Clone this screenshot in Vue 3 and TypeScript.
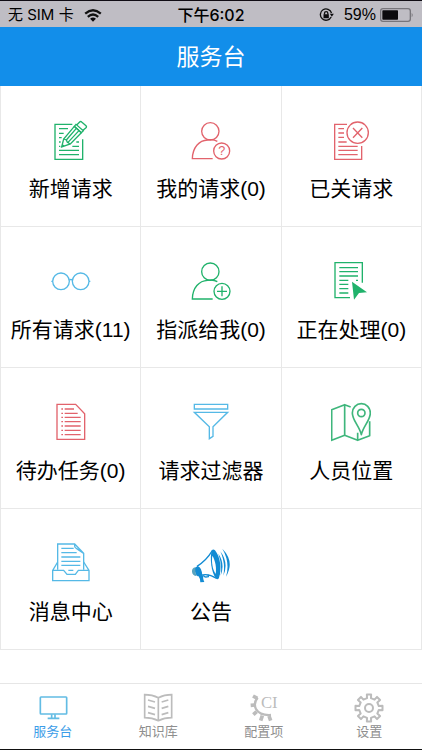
<script setup lang="ts">
import { ref } from 'vue'

interface Tile {
  icon: string
  name: string
  count?: number
}

const tiles: Tile[] = [
  { icon: 'create', name: '新增请求' },
  { icon: 'mine', name: '我的请求', count: 0 },
  { icon: 'closed', name: '已关请求' },
  { icon: 'all', name: '所有请求', count: 11 },
  { icon: 'assigned', name: '指派给我', count: 0 },
  { icon: 'progress', name: '正在处理', count: 0 },
  { icon: 'todo', name: '待办任务', count: 0 },
  { icon: 'filter', name: '请求过滤器' },
  { icon: 'location', name: '人员位置' },
  { icon: 'inbox', name: '消息中心' },
  { icon: 'notice', name: '公告' },
]

const tabs = [
  { id: 'desk', name: '服务台' },
  { id: 'knowledge', name: '知识库' },
  { id: 'config', name: '配置项' },
  { id: 'settings', name: '设置' },
]

const activeTab = ref('desk')

// Outline of a toothed wheel: each tooth is a trapezoid between two root arcs.
function gearPath(c: number, outer: number, root: number, teeth: number): string {
  const step = (Math.PI * 2) / teeth
  const points: string[] = []
  for (let i = 0; i < teeth; i++) {
    const a = i * step - Math.PI / 2
    const corners: [number, number][] = [
      [root, -0.25],
      [outer, -0.2],
      [outer, 0.2],
      [root, 0.25],
    ]
    for (const [r, k] of corners) {
      const t = a + k * step
      points.push(`${(c + r * Math.cos(t)).toFixed(1)} ${(c + r * Math.sin(t)).toFixed(1)}`)
    }
  }
  return `M${points.join('L')}Z`
}

const settingsGear = gearPath(45, 41, 30, 8)
</script>

<template>
  <div class="screen">
    <div class="status">
      <div class="status-side">
        <span class="carrier">无 SIM 卡</span>
        <svg class="wifi" viewBox="0 0 54 40" aria-hidden="true">
          <path d="M3 14Q27 -6 51 14" />
          <path d="M11 24Q27 10 43 24" />
          <path class="solid" d="M18 30Q27 23 36 30L27 39Z" />
        </svg>
      </div>
      <span class="time">下午6:02</span>
      <div class="status-side end">
        <svg class="lock" viewBox="0 0 44 42" aria-hidden="true">
          <path d="M36 27A17 17 0 1 1 37 15" />
          <path class="solid" d="M32 17H44L38 26Z" />
          <rect class="solid" x="13" y="19" width="16" height="12" rx="1" />
          <path d="M16 20V16A5 5 0 0 1 26 16V20" />
        </svg>
        <span class="percent">59%</span>
        <svg class="battery" viewBox="0 0 102 42" aria-hidden="true">
          <rect class="shell" x="2" y="2" width="89" height="38" rx="7" />
          <rect class="solid" x="7" y="7" width="47" height="28" rx="2" />
          <path class="cap" d="M95 14Q101 21 95 28Z" />
        </svg>
      </div>
    </div>

    <header class="header">
      <h1>服务台</h1>
    </header>

    <main class="content">
      <div class="grid">
        <button v-for="tile in tiles" :key="tile.icon" type="button" class="tile">
          <svg v-if="tile.icon === 'create'" class="icon green" viewBox="0 0 120 120" aria-hidden="true">
            <path d="M64 13H12V118H95V58" />
            <path d="M24 26H51M24 40H38M24 53H32M24 66H29M24 79H28M76 66H84M64 79H84M24 91H84M24 104H84" />
            <path d="M32 81L38 57L70 19L91 38L58 72Z" />
            <path d="M38 57L46 60L49 67L58 72M46 60L76 25M51 67L84 32M34 74L39 79" />
            <path d="M70 19L75 13L97 32L91 38ZM77 15L86 6Q89 3 92 6L105 17Q108 20 105 23L96 31" />
          </svg>

          <svg v-else-if="tile.icon === 'mine'" class="icon red" viewBox="0 0 120 120" aria-hidden="true">
            <circle cx="58" cy="34" r="26" />
            <path d="M65 116H4C5 82 24 61 50 60Q67 57 79 64" />
            <circle cx="92" cy="93" r="24" />
            <text x="92" y="106" text-anchor="middle">?</text>
          </svg>

          <svg v-else-if="tile.icon === 'closed'" class="icon red" viewBox="0 0 120 120" aria-hidden="true">
            <path d="M48 13H11V118H92V78" />
            <path d="M22 26H39M22 39H39M22 52H39M22 66H47M22 79H80M22 91H80M22 104H80" />
            <circle cx="80" cy="38" r="32" />
            <path d="M66 24L94 53M94 24L66 53" />
          </svg>

          <svg v-else-if="tile.icon === 'all'" class="icon blue" viewBox="0 0 120 120" aria-hidden="true">
            <circle cx="30" cy="61" r="25" />
            <circle cx="89" cy="61" r="25" />
            <path d="M55 57Q60 54 64 57M1 61H5M114 61H118" />
          </svg>

          <svg v-else-if="tile.icon === 'assigned'" class="icon green" viewBox="0 0 120 120" aria-hidden="true">
            <circle cx="58" cy="32" r="26" />
            <path d="M65 114H4C5 80 24 59 50 58Q67 55 79 62" />
            <circle cx="93" cy="91" r="24" />
            <path d="M93 76V106M78 91H108" />
          </svg>

          <svg v-else-if="tile.icon === 'progress'" class="icon green" viewBox="0 0 120 120" aria-hidden="true">
            <path d="M57 110H12V5H94V65" />
            <path d="M25 20H81M25 32H81M25 45H81M25 58H52M75 58H81M25 70H52M25 83H52M25 96H52" />
            <path class="fill" d="M63 62L108 94L84 96L69 116Z" />
          </svg>

          <svg v-else-if="tile.icon === 'todo'" class="icon red" viewBox="0 0 120 120" aria-hidden="true">
            <path d="M18 7H74L101 35V112H18Z" />
            <path d="M41 21H69M41 34H80M41 46H89M41 59H89M41 72H89M41 85H89M41 98H89" />
            <path d="M31 21H36M31 34H36M31 46H36M31 59H36M31 72H36M31 85H36M31 98H36" />
          </svg>

          <svg v-else-if="tile.icon === 'filter'" class="icon blue" viewBox="0 0 120 120" aria-hidden="true">
            <path d="M10 7H110V21H10ZM10 31H110L66 74V103L55 110V74Z" />
          </svg>

          <svg v-else-if="tile.icon === 'location'" class="icon map" viewBox="0 0 120 120" aria-hidden="true">
            <path d="M59 15L41 8L2 23V115L41 100L80 115L116 101V58M41 8V100M80 92V115" />
            <path d="M91 98C85 72 64 55 64 33A27 28 0 0 1 118 33C118 55 97 72 91 98Z" />
            <circle cx="91" cy="33" r="11" />
          </svg>

          <svg v-else-if="tile.icon === 'inbox'" class="icon blue" viewBox="0 0 120 120" aria-hidden="true">
            <path d="M20 80V3H71L98 31V80M71 3V10Q71 14 77 17L98 31" />
            <path d="M31 16H68M31 29H77M31 42H88M31 55H88M31 67H88M52 82H67" />
            <path d="M20 57L5 82V113H114V82L98 57M5 82H38L48 94H73L82 82H114" />
          </svg>

          <svg v-else class="icon horn" viewBox="0 0 120 120" aria-hidden="true">
            <path class="fill" d="M62 23Q66 16 72 22C88 41 93 80 84 104Q80 113 74 105C61 87 56 47 62 23Z" />
            <path class="paper" d="M64 38C73 52 77 74 74 93C65 80 61 58 64 38Z" />
            <path d="M64 23Q46 53 18 70M28 97Q52 90 77 106" />
            <path class="fill" d="M20 69Q33 74 34 98L20 100Q10 92 12 74Z" />
            <path class="fill pale" d="M13 73Q2 75 3 86Q4 98 17 99Q11 88 13 73Z" />
            <path class="fill" d="M22 98L38 97Q34 105 40 117L28 118Q29 108 22 98Z" />
            <path d="M38 97Q38 104 52 101V95" />
            <path class="fill" d="M82 32Q103 62 89 98Q94 64 82 32ZM88 25Q114 60 97 98Q104 60 88 25ZM94 17Q132 56 105 101Q118 58 94 17Z" />
          </svg>

          <span class="label">{{ tile.name }}<template v-if="tile.count !== undefined">({{ tile.count }})</template></span>
        </button>
        <div class="tile" aria-hidden="true"></div>
      </div>
    </main>

    <nav class="tabs">
      <a
        v-for="tab in tabs"
        :key="tab.id"
        :href="'#' + tab.id"
        class="tab"
        :class="{ active: tab.id === activeTab }"
        @click.prevent="activeTab = tab.id"
      >
        <svg v-if="tab.id === 'desk'" class="tab-icon" viewBox="0 0 90 90" aria-hidden="true">
          <rect x="7" y="12" width="79" height="51" rx="2" />
          <path d="M41 64V75M51 64V75M29 76H64" />
        </svg>
        <svg v-else-if="tab.id === 'knowledge'" class="tab-icon" viewBox="0 0 90 90" aria-hidden="true">
          <path d="M5 5Q28 5 46 14Q64 5 86 5V74Q64 74 46 83Q28 74 5 74ZM46 14V83" />
          <path d="M15 21L36 27M15 40L36 46M15 59L36 65M76 21L56 27M76 40L56 46M76 59L56 65" />
        </svg>
        <svg v-else-if="tab.id === 'config'" class="tab-icon" viewBox="0 0 90 90" aria-hidden="true">
          <path class="rim" d="M26 14Q12 30 21 48Q32 68 66 66" />
          <path class="teeth" d="M25 16L12 9M17 36L5 37M23 56L13 65M40 68L35 83M60 69L65 83" />
          <text x="61" y="46" text-anchor="middle">CI</text>
        </svg>
        <svg v-else class="tab-icon" viewBox="0 0 90 90" aria-hidden="true">
          <path class="gear" :d="settingsGear" />
          <circle class="gear" cx="45" cy="45" r="12" />
        </svg>
        <span>{{ tab.name }}</span>
      </a>
    </nav>
  </div>
</template>

<style>
body {
  margin: 0;
  background: #fff;
}
</style>

<style scoped>
.screen {
  display: flex;
  flex-direction: column;
  box-sizing: border-box;
  min-height: 100vh;
  border-top: 1px solid #100c14;
  border-bottom: 1px solid #111;
  background: #fff;
  color: #000;
  font-family: 'Liberation Sans', 'Noto Sans CJK SC', sans-serif;
}

.status {
  display: grid;
  grid-template-columns: 1fr auto 1fr;
  align-items: center;
  height: 26px;
  padding: 2px 8px 0;
  box-sizing: border-box;
  background: #bfbdc4;
  font-size: 15px;
  line-height: 20px;
  white-space: nowrap;
}

.status-side {
  display: flex;
  align-items: center;
  gap: 10px;
}

.status-side.end {
  justify-content: flex-end;
  gap: 4px;
}

.carrier {
  font-family: Inter, 'Noto Sans CJK SC', sans-serif;
}

.time {
  font-family: Inter, 'Noto Sans CJK SC', sans-serif;
  font-size: 16px;
  font-weight: 500;
}

.percent {
  padding-left: 6px;
  font-size: 16px;
}

.status svg {
  fill: none;
  stroke: #111;
  stroke-width: 4;
}

.status .solid {
  fill: #0b0a0d;
  stroke: none;
}

.status .wifi {
  width: 18px;
  height: 13px;
  stroke-width: 7;
}

.status .lock {
  width: 15px;
  height: 14px;
}

.status .battery {
  width: 34px;
  height: 14px;
}

.status .shell {
  stroke: #77757b;
}

.status .cap {
  fill: #77757b;
  stroke: none;
}

.header {
  display: flex;
  align-items: center;
  justify-content: center;
  height: 59px;
  background: #128eea;
}

.header h1 {
  margin: 0;
  color: #fff;
  font-size: 23px;
  font-weight: 400;
  line-height: 32px;
}

.content {
  flex: 1;
}

.grid {
  display: grid;
  grid-template-columns: repeat(3, 1fr);
  gap: 1px;
  border: solid #e8e8e8;
  border-width: 0 1px 1px;
  background: #e8e8e8;
}

.tile {
  display: flex;
  flex-direction: column;
  align-items: center;
  justify-content: flex-start;
  gap: 14px;
  box-sizing: border-box;
  height: 140px;
  margin: 0;
  padding: 34px 0 0;
  border: 0;
  background: #fff;
  color: #000;
  font: inherit;
  cursor: pointer;
}

.label {
  font-size: 21px;
  line-height: 30px;
  white-space: nowrap;
}

.icon {
  width: 40px;
  height: 40px;
  fill: none;
  stroke: currentColor;
  stroke-width: 4;
}

.green {
  color: #20b26b;
}

.map {
  color: #3fb67c;
  stroke-width: 5;
  stroke-linejoin: round;
}

.red {
  color: #e2636c;
}

.blue {
  color: #55b9e6;
}

.horn {
  color: #128bd3;
}

.icon .fill {
  fill: currentColor;
  stroke: none;
}

.icon .pale {
  fill: #58a3bf;
}

.icon .paper {
  fill: #fff;
  stroke: none;
}

.icon text {
  fill: currentColor;
  stroke: none;
  font-size: 38px;
}

.tabs {
  display: grid;
  grid-template-columns: repeat(4, 1fr);
  height: 65px;
  border-top: 1px solid #e6e6e6;
}

.tab {
  display: flex;
  flex-direction: column;
  align-items: center;
  padding-top: 9px;
  color: #8e8e8e;
  font-size: 13px;
  line-height: 18px;
  text-decoration: none;
}

.tab.active {
  color: #3c9de8;
}

.tab-icon {
  width: 30px;
  height: 30px;
  overflow: visible;
  fill: none;
  stroke: #bcbcbc;
  stroke-width: 5;
}

.active .tab-icon {
  stroke: #62bce4;
}

.tab-icon .rim {
  stroke-width: 7;
}

.tab-icon .teeth {
  stroke-width: 11;
}

.tab-icon .gear {
  stroke-width: 6;
  stroke-linejoin: round;
}

.tab-icon text {
  fill: #bcbcbc;
  stroke: none;
  font-family: 'Liberation Serif', serif;
  font-size: 50px;
}
</style>
